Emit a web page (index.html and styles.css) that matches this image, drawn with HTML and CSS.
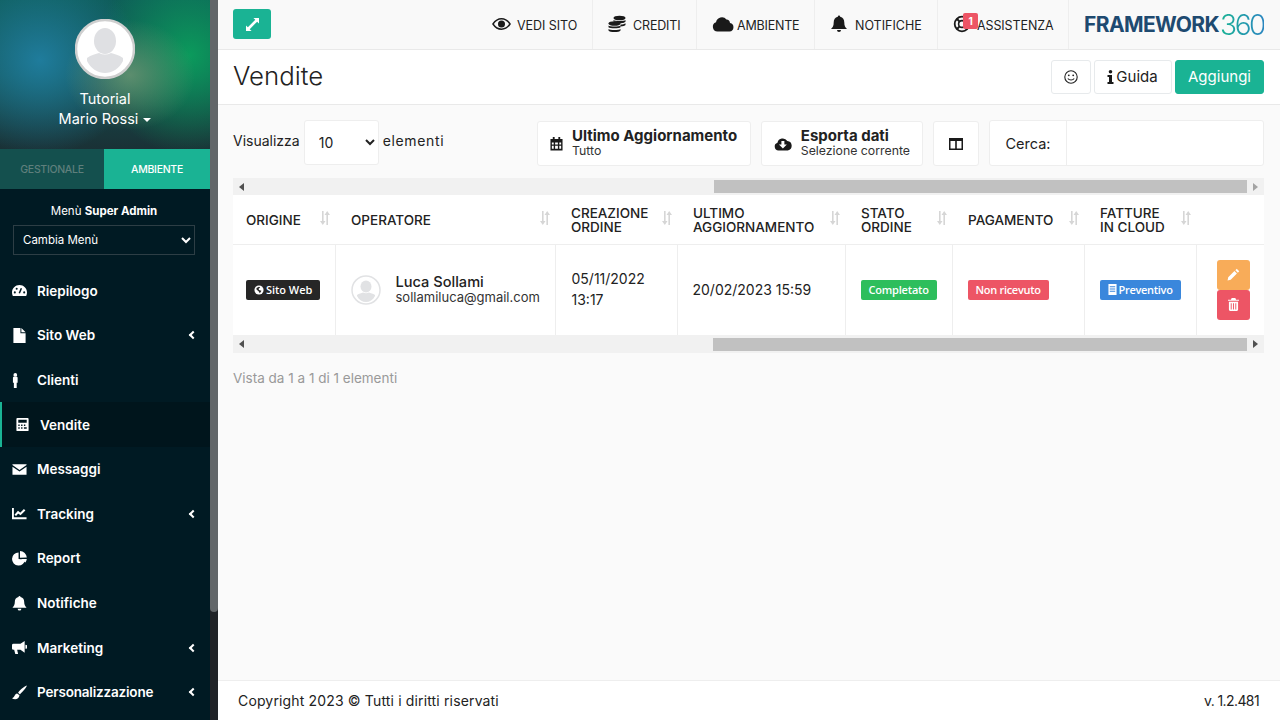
FILE: index.html
```html
<!DOCTYPE html>
<html lang="it">
<head>
    <meta charset="UTF-8">
    <meta name="viewport" content="width=device-width, initial-scale=1.0">
    <title>Vendite</title>
    <link rel="stylesheet" href="styles.css">
</head>
<body>

<div class="sidebar-wrap">
    <aside class="sidebar">
        <div class="profile">
            <svg class="avatar" viewBox="0 0 60 60">
                <circle cx="30" cy="30" r="29" fill="#fff" stroke="#cfcfcf" stroke-width="2.5"/>
                <ellipse cx="30" cy="22" rx="11" ry="13" fill="#dfe0e3"/>
                <path d="M12 39c4-3 9-4 12-5 4 2 8 2 12 0 3 1 8 2 12 5v3c-4 8-11 12-18 12s-14-4-18-12z" fill="#dfe0e3"/>
            </svg>
            <div class="profile-org">Tutorial</div>
            <div class="profile-name">Mario Rossi <span class="caret"></span></div>
        </div>
        <div class="tabs">
            <div class="tab">GESTIONALE</div>
            <div class="tab tab-active">AMBIENTE</div>
        </div>
        <div class="menu-switch">
            <div class="menu-title">Menù <b>Super Admin</b></div>
            <select class="menu-select"><option>Cambia Menù</option></select>
        </div>
        <nav class="menu">
            <a class="menu-item">
                <svg class="mi" viewBox="0 0 16 16"><path d="M8 2C3.600 2 0 5.600 0 10c0 1.300.3 2.500.9 3.800h14.200c.6-1.300.9-2.500.9-3.800 0-4.400-3.600-8-8-8z" fill="#fff"/><path d="M7.800 11l2.200-5.500" stroke="#001a23" stroke-width="1.600"/><circle cx="3" cy="10" r="1.100" fill="#001a23"/><circle cx="5" cy="6.200" r="1.100" fill="#001a23"/><circle cx="13" cy="10" r="1.100" fill="#001a23"/></svg>
                <span>Riepilogo</span>
            </a>
            <a class="menu-item">
                <svg class="mi" viewBox="0 0 16 16"><path d="M1.500 0h7.500v5.500h5.500V16H1.500zM10 0l4.500 4.500H10z" fill="#fff"/></svg>
                <span>Sito Web</span><i class="chev"></i>
            </a>
            <a class="menu-item">
                <svg class="mi" viewBox="0 0 16 16"><circle cx="3.500" cy="2" r="2" fill="#fff"/><path d="M1 5c0-.6.4-1 1-1h3c.6 0 1 .4 1 1v5.500H5V16H2v-5.500H1z" fill="#fff"/></svg>
                <span>Clienti</span>
            </a>
            <a class="menu-item menu-item-active">
                <svg class="mi" viewBox="0 0 16 16"><path fill-rule="evenodd" d="M2.500 1h11a1 1 0 0 1 1 1v12a1 1 0 0 1-1 1h-11a1 1 0 0 1-1-1V2a1 1 0 0 1 1-1zM3.500 3v3h9V3zm0 5v1.500H5V8zm3 0v1.500H8V8zm3 0v1.500H11V8zm-6 3v1.500H5V11zm3 0v1.500H8V11zm3 0v1.500H12.500V11z" fill="#fff"/></svg>
                <span>Vendite</span>
            </a>
            <a class="menu-item">
                <svg class="mi" viewBox="0 0 16 16"><path d="M.5 2.500h15v.7L8 8.500.5 3.200zM.5 5l7.500 5 7.500-5v8.500H.5z" fill="#fff"/></svg>
                <span>Messaggi</span>
            </a>
            <a class="menu-item">
                <svg class="mi" viewBox="0 0 16 16"><path d="M1 2v11h14.500" fill="none" stroke="#fff" stroke-width="2"/><path d="M3.500 10 6.500 6.500l2.500 2 4.500-4.500" fill="none" stroke="#fff" stroke-width="2.200"/></svg>
                <span>Tracking</span><i class="chev"></i>
            </a>
            <a class="menu-item">
                <svg class="mi" viewBox="0 0 16 16"><path d="M7 1.500a7 7 0 1 0 7 7.700L7 8.500z" fill="#fff"/><path d="M8.500 0v7.200l7.300-.2A7.500 7.500 0 0 0 8.500 0z" fill="#fff"/><path d="M9.500 8.600h6.300a7 7 0 0 1-1.500 3.600z" fill="#fff"/></svg>
                <span>Report</span>
            </a>
            <a class="menu-item">
                <svg class="mi" viewBox="0 0 16 16"><path d="M8 0a1.100 1.100 0 0 1 1.100 1.100C12 1.700 13 4 13 6.500c0 3 1 4.500 2.500 6h-15C2 11 3 9.500 3 6.500 3 4 4 1.700 6.900 1.100A1.100 1.100 0 0 1 8 0zM6 13.500h4a2 2 0 0 1-4 0z" fill="#fff"/></svg>
                <span>Notifiche</span>
            </a>
            <a class="menu-item">
                <svg class="mi" viewBox="0 0 16 16"><path d="M13.500 1v12.500L9 10.500H5.500l1 4.500H3.500L2.300 10.500H1.500A1.500 1.500 0 0 1 0 9V5.500A1.500 1.500 0 0 1 1.500 4H9z" fill="#fff"/><path d="M14.300 5a2.200 2.200 0 0 1 0 4.400z" fill="#fff"/></svg>
                <span>Marketing</span><i class="chev"></i>
            </a>
            <a class="menu-item menu-item-long">
                <svg class="mi" viewBox="0 0 16 16"><path d="M15.800.5C14.500.5 8.500 5 6.500 8.200l2 1.800C11 7.800 16.200 1.800 15.800.5zM5.500 9C2.500 9.500 3 13 0 14c2.500 2.200 7.500 1.500 8-3z" fill="#fff"/></svg>
                <span>Personalizzazione</span><i class="chev"></i>
            </a>
        </nav>
    </aside>
    <div class="side-scroll"><div class="side-thumb"></div></div>
</div>

<div class="main">
    <header class="topbar">
        <button class="expand-btn">
            <svg viewBox="0 0 14 14" width="13" height="13"><path d="M8 0h6v6l-2-2-8 8 2 2H0V8l2 2 8-8z" fill="#fff"/></svg>
        </button>
        <div class="top-nav">
            <a class="top-item top-site">
                <svg class="ti ti-eye" viewBox="0 0 20 14"><path d="M1 7c2.500-3.700 5.500-5.500 9-5.500s6.500 1.800 9 5.500c-2.500 3.700-5.500 5.500-9 5.500S3.500 10.700 1 7z" fill="none" stroke="#1a1a1a" stroke-width="1.500"/><circle cx="10" cy="7" r="3.700" fill="#1a1a1a"/></svg>
                VEDI SITO
            </a>
            <a class="top-item top-credits">
                <svg class="ti" viewBox="0 0 18 18"><g fill="#1a1a1a"><ellipse cx="11.500" cy="3" rx="6" ry="2.300"/><path d="M5.500 5c1 1.300 11 1.300 12 0v1.500c-.5 1.300-4 1.800-6 1.800-.5-1-3-1.800-6-1.800z"/><path d="M12.500 9.500c2 0 4-.5 5-1.300v1.800c-.5.800-2.500 1.300-5 1.500z"/><ellipse cx="6.500" cy="8.500" rx="6" ry="2.300"/><path d="M.5 10.500c1 1.300 11 1.300 12 0v1.800c-1 1.300-11 1.300-12 0zM.5 14c1 1.300 11 1.300 12 0v1.500c-1 2-11 2-12 0z"/></g></svg>
                CREDITI
            </a>
            <a class="top-item top-env">
                <svg class="ti ti-cloud" viewBox="0 0 22 16"><path d="M5.500 15.500A4.800 4.800 0 0 1 4 6.200 6 6 0 0 1 14.500 3.500 4 4 0 0 1 18 7a4.300 4.300 0 0 1-.5 8.500z" fill="#1a1a1a"/></svg>
                AMBIENTE
            </a>
            <a class="top-item top-notify">
                <svg class="ti" viewBox="0 0 18 18"><path d="M9 .5a1.200 1.200 0 0 1 1.200 1.200C13 2.300 14.300 4.500 14.300 7.500c0 3.500 1 4.800 2.700 6.500H1c1.700-1.700 2.700-3 2.700-6.500 0-3 1.300-5.200 4.100-5.800A1.200 1.200 0 0 1 9 .5zM7 15h4a2 2 0 0 1-4 0z" fill="#1a1a1a"/></svg>
                NOTIFICHE
            </a>
            <a class="top-item top-help">
                <svg class="ti ti-ring" viewBox="0 0 18 18"><circle cx="9" cy="9" r="7.300" fill="none" stroke="#1a1a1a" stroke-width="1.800"/><circle cx="9" cy="9" r="3.400" fill="none" stroke="#1a1a1a" stroke-width="1.600"/><path d="M3.800 3.800 6.600 6.600M14.200 3.800l-2.800 2.800M3.800 14.200l2.800-2.800M14.200 14.200l-2.800-2.800" stroke="#1a1a1a" stroke-width="2"/></svg>
                <span class="top-badge">1</span>
                ASSISTENZA
            </a>
            <div class="logo"><b>FRAMEWORK</b><span>360</span></div>
        </div>
    </header>

    <section class="page-head">
        <h1>Vendite</h1>
        <div class="head-actions">
            <button class="btn btn-icon">
                <svg viewBox="0 0 14 14" width="14" height="14"><circle cx="7" cy="7" r="6.200" fill="none" stroke="#222" stroke-width="1.100"/><circle cx="4.800" cy="5.300" r=".9" fill="#222"/><circle cx="9.200" cy="5.300" r=".9" fill="#222"/><path d="M3.800 8.500c1.500 2 5 2 6.400 0" fill="none" stroke="#222" stroke-width="1.100"/></svg>
            </button>
            <button class="btn btn-guide">
                <svg viewBox="0 0 7 14" width="7" height="14"><circle cx="3.500" cy="1.800" r="1.800" fill="#1a1a1a"/><path d="M.5 5h4.500v7H6.500v2H.5v-2H2V7H.5z" fill="#1a1a1a"/></svg>
                Guida
            </button>
            <button class="btn btn-add">Aggiungi</button>
        </div>
    </section>

    <section class="content">
        <div class="toolbar">
            <label class="length">
                <span>Visualizza</span>
                <select class="length-select"><option>10</option></select>
                <span class="length-after">elementi</span>
            </label>
            <div class="tools">
                <button class="tool tool-updated">
                    <svg viewBox="0 0 14 15" width="13" height="14"><path fill-rule="evenodd" d="M3 0h2v2h4V0h2v2h2.500v12.500H.5V2H3zM2 6v2h2V6zm3.500 0v2h3V6zm4.500 0v2h2V6zM2 9.500v3h2v-3zm3.500 0v3h3v-3zm4.500 0v3h2v-3z" fill="#1a1a1a"/></svg>
                    <span class="tool-text"><b>Ultimo Aggiornamento</b><small>Tutto</small></span>
                </button>
                <button class="tool tool-export">
                    <svg viewBox="0 0 18 14" width="18" height="14"><path fill-rule="evenodd" d="M4.500 13.500A4 4 0 0 1 3.500 5.700 5.500 5.500 0 0 1 13.500 4 4.800 4.800 0 0 1 14 13.500zM7.500 4v3.500H5L9 11.500l4-4h-2.500V4z" fill="#1a1a1a"/></svg>
                    <span class="tool-text"><b>Esporta dati</b><small>Selezione corrente</small></span>
                </button>
                <button class="tool tool-cols">
                    <svg viewBox="0 0 14 12" width="14" height="12"><path fill-rule="evenodd" d="M0 0h14v12H0zM1.500 3v7.500h4.700V3zm6.300 0v7.500h4.700V3z" fill="#1a1a1a"/></svg>
                </button>
                <label class="search">
                    <span class="search-label">Cerca:</span>
                    <input class="search-input" type="search">
                </label>
            </div>
        </div>

        <div class="fake-scroll">
            <span class="arrow arrow-left"></span>
            <span class="scroll-space scroll-space-top"></span>
            <span class="scroll-thumb"></span>
            <span class="arrow arrow-right arrow-dim"></span>
        </div>

        <table class="orders">
            <colgroup>
                <col class="c1"><col class="c2"><col class="c3"><col class="c4"><col class="c5"><col class="c6"><col class="c7"><col class="c8">
            </colgroup>
            <thead>
                <tr>
                    <th class="first"><div class="th-in">ORIGINE<svg class="sort"><use href="#sort-ic"/></svg></div></th>
                    <th><div class="th-in">OPERATORE<svg class="sort"><use href="#sort-ic"/></svg></div></th>
                    <th><div class="th-in">CREAZIONE<br>ORDINE<svg class="sort"><use href="#sort-ic"/></svg></div></th>
                    <th><div class="th-in"><span>ULTIMO<br>AGGIORNAMENTO</span><svg class="sort"><use href="#sort-ic"/></svg></div></th>
                    <th><div class="th-in"><span>STATO<br>ORDINE</span><svg class="sort"><use href="#sort-ic"/></svg></div></th>
                    <th><div class="th-in">PAGAMENTO<svg class="sort"><use href="#sort-ic"/></svg></div></th>
                    <th><div class="th-in"><span>FATTURE<br>IN CLOUD</span><svg class="sort"><use href="#sort-ic"/></svg></div></th>
                    <th></th>
                </tr>
            </thead>
            <tbody>
                <tr>
                    <td class="first">
                        <span class="label label-dark">
                            <svg viewBox="0 0 12 12" width="10" height="10"><circle cx="6" cy="6" r="5.500" fill="#fff"/><path d="M3 3.500l3-1.500 1.500 1-2 1.500.5 1.500 3 1-2 3-1.500-2.500-2.500-2z" fill="#262626"/></svg>
                            Sito Web
                        </span>
                    </td>
                    <td>
                        <div class="operator">
                            <svg class="op-avatar" viewBox="0 0 30 30">
                                <circle cx="15" cy="15" r="14" fill="#fff" stroke="#e1e2e4" stroke-width="1.500"/>
                                <ellipse cx="15" cy="11.500" rx="5.500" ry="6" fill="#e1e2e4"/>
                                <path d="M6 20c2-1.500 4.500-2 6-2.500 2 1 4 1 6 0 1.500.5 4 1 6 2.500v1c-2 4-5.500 6-9 6s-7-2-9-6z" fill="#e1e2e4"/>
                            </svg>
                            <div>
                                <div class="op-name">Luca Sollami</div>
                                <div class="op-mail">sollamiluca@gmail.com</div>
                            </div>
                        </div>
                    </td>
                    <td class="two-lines">05/11/2022<br>13:17</td>
                    <td>20/02/2023 15:59</td>
                    <td><span class="label label-green">Completato</span></td>
                    <td><span class="label label-red">Non ricevuto</span></td>
                    <td>
                        <span class="label label-blue">
                            <svg viewBox="0 0 10 12" width="9" height="11"><path fill-rule="evenodd" d="M.5 0h9v12h-9zM2 2.500v1h6v-1zm0 2.500v1h6V5zm0 2.500v1h6v-1z" fill="#fff"/></svg>
                            Preventivo
                        </span>
                    </td>
                    <td class="actions">
                        <button class="act act-edit">
                            <svg viewBox="0 0 14 14" width="13" height="13"><path d="M10.500.8l2.700 2.700-1.500 1.500L9 2.300zM8 3.300 10.700 6l-6.700 6.700-3.400.7.700-3.400z" fill="#fff"/></svg>
                        </button>
                        <button class="act act-del">
                            <svg viewBox="0 0 12 14" width="11" height="13"><path fill-rule="evenodd" d="M4 0h4l.8 1.800H12V3H0V1.800h3.200zM1 4h10v8.500c0 .8-.6 1.500-1.300 1.500H2.300C1.600 14 1 13.300 1 12.500zm2 1.500v7h1v-7zm2.500 0v7h1v-7zm2.500 0v7h1v-7z" fill="#fff"/></svg>
                        </button>
                    </td>
                </tr>
            </tbody>
        </table>

        <div class="fake-scroll fake-scroll-bottom">
            <span class="arrow arrow-left"></span>
            <span class="scroll-space scroll-space-bottom"></span>
            <span class="scroll-thumb"></span>
            <span class="arrow arrow-right"></span>
        </div>

        <div class="table-info">Vista da 1 a 1 di 1 elementi</div>
    </section>

    <footer class="footer">
        <span class="copyright">Copyright 2023 © Tutti i diritti riservati</span>
        <span class="version">v. 1.2.481</span>
    </footer>
</div>

<svg class="defs" width="0" height="0">
    <symbol id="sort-ic" viewBox="0 0 12 14">
        <path d="M3 0h1.600v10H6.500L3.800 14 1 10h2z" fill="#d6d6d6"/>
        <path d="M9 14H7.400V4H5.500L8.200 0 11 4H9z" fill="#d6d6d6"/>
    </symbol>
</svg>

</body>
</html>
```

FILE: styles.css
```css
* {
    box-sizing: border-box;
}
html, body {
    height: 100%;
}
body {
    margin: 0;
    display: flex;
    height: 100vh;
    overflow: hidden;
    font-family: 'Inter', 'Noto Sans', sans-serif;
    font-size: 14px;
    color: #222;
    background: #fafafa;
}
button {
    font-family: inherit;
    cursor: pointer;
}
a {
    color: inherit;
}
.defs {
    position: absolute;
}

/* sidebar */
.sidebar-wrap {
    display: flex;
    flex: 0 0 218px;
    height: 100%;
}
.sidebar {
    width: 210px;
    background: #001a23;
    color: #fff;
    overflow: hidden;
}
.side-scroll {
    width: 8px;
    background: #202327;
}
.side-thumb {
    height: 612px;
    background: #626669;
    border-radius: 0 0 4px 4px;
}
.profile {
    height: 149px;
    padding-top: 19px;
    text-align: center;
    background:
        radial-gradient(65px 55px at 130px 75px, rgba(100, 145, 112, 0.9), rgba(100, 145, 112, 0)),
        radial-gradient(100px 95px at 40px 60px, #1f7c9c, rgba(31, 124, 156, 0)),
        radial-gradient(95px 100px at 190px 55px, #0b9a5c, rgba(11, 154, 92, 0)),
        linear-gradient(180deg, #0e5c58 0%, #13504f 50%, #1a3136 100%);
}
.avatar {
    display: block;
    width: 60px;
    height: 60px;
    margin: 0 auto 10px;
}
.profile-org,
.profile-name {
    font-size: 14.5px;
    line-height: 20px;
}
.caret {
    display: inline-block;
    margin-left: 1px;
    vertical-align: middle;
    border-top: 4px solid #fff;
    border-left: 4px solid transparent;
    border-right: 4px solid transparent;
}
.tabs {
    display: flex;
    height: 40px;
}
.tab {
    display: flex;
    align-items: center;
    justify-content: center;
    width: 104px;
    font-size: 10.5px;
    font-weight: 500;
    letter-spacing: -0.3px;
    background: #14504e;
    color: #5f7f7c;
}
.tab-active {
    width: 106px;
    background: #1ab394;
    color: #fff;
}
.menu-switch {
    padding: 14px 15px 0 13px;
    text-align: center;
}
.menu-title {
    font-size: 11.5px;
    line-height: 16px;
    margin-bottom: 6px;
}
.menu-select {
    display: block;
    width: 182px;
    height: 30px;
    padding-left: 5px;
    background: #001a23;
    border: 1px solid #2d3e45;
    color: #fff;
    color-scheme: dark;
    font-family: inherit;
    font-size: 11.5px;
}
.menu {
    padding-top: 13.6px;
}
.menu-item {
    display: flex;
    align-items: center;
    height: 44.6px;
    padding: 0 14px 0 12px;
    font-size: 13.5px;
    font-weight: 600;
}
.menu-item span {
    flex: 1;
}
.menu-item-long {
    letter-spacing: -0.18px;
}
.menu-item-active {
    background: #00151c;
    border-left: 2px solid #1ab394;
    padding-left: 13px;
}
.mi {
    flex: 0 0 15px;
    width: 15px;
    height: 15px;
    margin-right: 10px;
}
.chev {
    width: 6px;
    height: 6px;
    border-left: 2px solid #fff;
    border-bottom: 2px solid #fff;
    transform: rotate(45deg);
}

/* main column */
.main {
    flex: 1;
    display: flex;
    flex-direction: column;
    min-width: 0;
}
.topbar {
    display: flex;
    align-items: center;
    justify-content: space-between;
    height: 50px;
    padding-left: 15px;
    background: #f9f9f9;
    border-bottom: 1px solid #e9e9e9;
}
.expand-btn {
    display: flex;
    align-items: center;
    justify-content: center;
    width: 38px;
    height: 30px;
    margin-top: -1px;
    padding: 0;
    border: 0;
    border-radius: 3px;
    background: #1ab394;
}
.top-nav {
    display: flex;
    height: 100%;
    align-items: stretch;
}
.top-item {
    position: relative;
    display: flex;
    align-items: center;
    padding: 2px 0 0 15px;
    font-size: 12.5px;
    color: #222;
    border-right: 1px solid #eeeeee;
}
.top-site {
    width: 116px;
    letter-spacing: -0.05px;
}
.top-credits {
    width: 104px;
    letter-spacing: -0.15px;
}
.top-env {
    width: 118px;
    letter-spacing: -0.2px;
}
.top-notify {
    width: 123px;
}
.top-help {
    width: 131px;
    letter-spacing: -0.1px;
}
.ti {
    width: 18px;
    height: 18px;
    margin-right: 7px;
    margin-top: -4px;
}
.ti-eye {
    width: 19px;
    height: 14px;
    margin-right: 6px;
}
.ti-cloud {
    width: 22px;
    height: 16px;
    margin-right: 3px;
}
.ti-ring {
    margin-right: 6px;
}
.top-badge {
    position: absolute;
    left: 25px;
    top: 13px;
    width: 15px;
    height: 16px;
    border-radius: 2px;
    background: #ed5565;
    color: #fff;
    font-size: 10px;
    font-weight: 700;
    line-height: 16px;
    text-align: center;
}
.logo {
    display: flex;
    align-items: center;
    width: 211px;
    padding-left: 15px;
    font-size: 21px;
    letter-spacing: -0.6px;
    color: #1e4a70;
}
.logo b {
    font-weight: 700;
}
.logo span {
    margin-left: 1px;
    font-size: 28px;
    font-weight: 300;
    letter-spacing: -2.4px;
    background: linear-gradient(90deg, #1ab394, #2a86c0);
    -webkit-background-clip: text;
    background-clip: text;
    color: transparent;
}

.page-head {
    display: flex;
    align-items: center;
    justify-content: space-between;
    height: 55px;
    padding: 0 16px 1px 15px;
    background: #fff;
    border-bottom: 1px solid #e9e9e9;
}
.page-head h1 {
    margin: 0 0 2px;
    font-size: 25.8px;
    font-weight: 300;
    color: #222;
}
.head-actions {
    display: flex;
    gap: 3px;
}
.btn {
    display: flex;
    align-items: center;
    justify-content: center;
    height: 34px;
    padding: 0;
    background: #fff;
    border: 1px solid #e7eaec;
    border-radius: 3px;
    font-size: 15px;
    color: #222;
}
.btn-icon {
    width: 40px;
}
.btn-guide {
    gap: 2px;
    width: 78px;
    padding-right: 1px;
}
.btn-add {
    width: 89px;
    background: #1ab394;
    border-color: #1ab394;
    color: #fff;
}

.content {
    flex: 1;
    padding: 15px 16px 0 15px;
    background: #fafafa;
}
.toolbar {
    display: flex;
    justify-content: space-between;
    height: 46px;
    margin-bottom: 12px;
}
.length {
    display: flex;
    align-items: flex-start;
    gap: 4px;
    line-height: 42px;
    font-size: 14px;
}
.length-after {
    letter-spacing: 0.65px;
}
.length-select {
    width: 75px;
    height: 45px;
    padding-left: 10px;
    background: #fff;
    border: 1px solid #eeeeee;
    border-radius: 3px;
    font-family: inherit;
    font-size: 14px;
    color: #222;
}
.tools {
    display: flex;
    gap: 10px;
}
.tool {
    display: flex;
    align-items: center;
    gap: 9px;
    height: 45px;
    margin-top: 1px;
    padding: 0 12px;
    background: #fff;
    border: 1px solid #eeeeee;
    border-radius: 3px;
    text-align: left;
    color: #222;
    white-space: nowrap;
}
.tool-updated {
    width: 214px;
}
.tool-export {
    width: 162px;
}
.tool-cols {
    justify-content: center;
    width: 46px;
    padding: 0;
}
.tool-text {
    margin-top: -2px;
}
.tool-text b {
    display: block;
    font-size: 15px;
    font-weight: 700;
    line-height: 15px;
}
.tool-text small {
    display: block;
    font-size: 12.3px;
    line-height: 15px;
    color: #333;
}
.search {
    display: flex;
    width: 275px;
    height: 46px;
    background: #fff;
    border: 1px solid #eeeeee;
    border-radius: 3px;
    font-size: 14.5px;
}
.search-label {
    display: flex;
    align-items: center;
    justify-content: center;
    width: 77px;
    border-right: 1px solid #eeeeee;
}
.search-input {
    flex: 1;
    min-width: 0;
    border: 0;
    background: transparent;
}

.fake-scroll {
    display: flex;
    align-items: center;
    height: 17px;
    background: #f1f1f1;
}
.fake-scroll-bottom {
    height: 18px;
}
.arrow {
    width: 17px;
    height: 17px;
    flex: 0 0 17px;
    display: flex;
    align-items: center;
    justify-content: center;
}
.arrow::before {
    content: "";
    border-top: 4px solid transparent;
    border-bottom: 4px solid transparent;
}
.arrow-left::before {
    border-right: 5px solid #505050;
}
.arrow-right::before {
    border-left: 5px solid #505050;
}
.arrow-dim::before {
    border-left-color: #a3a3a3;
}
.scroll-space-top {
    width: 464px;
}
.scroll-space-bottom {
    width: 463px;
}
.scroll-thumb {
    flex: 1;
    height: 13px;
    background: #c1c1c1;
}

.orders {
    width: 1031px;
    border-collapse: collapse;
    table-layout: fixed;
    background: #fff;
    font-size: 14px;
}
.c1 { width: 102px; }
.c2 { width: 220px; }
.c3 { width: 122px; }
.c4 { width: 168px; }
.c5 { width: 107px; }
.c6 { width: 132px; }
.c7 { width: 112px; }
.c8 { width: 68px; }
.orders th {
    height: 49px;
    padding: 2px 4px 0 16px;
    text-align: left;
    font-size: 13.5px;
    font-weight: 500;
    line-height: 14px;
    border-bottom: 1px solid #eeeeee;
    color: #222;
}
.orders th.first,
.orders td.first {
    padding-left: 13px;
}
.th-in {
    position: relative;
    padding-right: 14px;
}
.sort {
    position: absolute;
    right: 0;
    top: 50%;
    width: 12px;
    height: 14px;
    margin-top: -9px;
}
.orders td {
    height: 91px;
    padding: 0 15px;
    border-right: 1px solid #eeeeee;
    vertical-align: middle;
}
.orders td:last-child {
    border-right: 0;
    padding: 0;
}
.label {
    display: inline-flex;
    align-items: center;
    justify-content: center;
    gap: 2px;
    height: 20px;
    padding: 0 8px;
    border-radius: 2px;
    color: #fff;
    font-family: 'Open Sans', sans-serif;
    font-size: 11px;
    font-weight: 600;
    letter-spacing: -0.3px;
    white-space: nowrap;
}
.label-dark {
    background: #262626;
    letter-spacing: -0.05px;
}
.label-green {
    background: #2dbe5c;
    letter-spacing: -0.2px;
}
.label-red {
    background: #ed5565;
}
.label-blue {
    background: #3a87dc;
}
.operator {
    display: flex;
    align-items: center;
    gap: 15px;
}
.op-avatar {
    flex: 0 0 30px;
    width: 30px;
    height: 30px;
}
.op-name {
    font-size: 14.6px;
    font-weight: 500;
    line-height: 16px;
}
.op-mail {
    font-size: 13px;
    line-height: 15px;
    color: #333;
}
.orders td.two-lines {
    padding: 0 15px 2px 16px;
    line-height: 21px;
}
.actions {
    text-align: center;
}
.act {
    display: flex;
    align-items: center;
    justify-content: center;
    width: 33px;
    height: 30px;
    margin: 0 0 0 20px;
    padding: 0;
    border: 0;
    border-radius: 3px;
}
.act-edit {
    background: #f8ac59;
}
.act-del {
    background: #ed5565;
}
.table-info {
    margin-top: 17px;
    font-size: 13.5px;
    color: #999;
}
.footer {
    display: flex;
    align-items: center;
    justify-content: space-between;
    height: 40px;
    padding: 0 21px 0 20px;
    background: #fff;
    border-top: 1px solid #eeeeee;
    font-size: 14px;
}
.copyright {
    letter-spacing: 0.15px;
}
.version {
    letter-spacing: -0.6px;
}
```
